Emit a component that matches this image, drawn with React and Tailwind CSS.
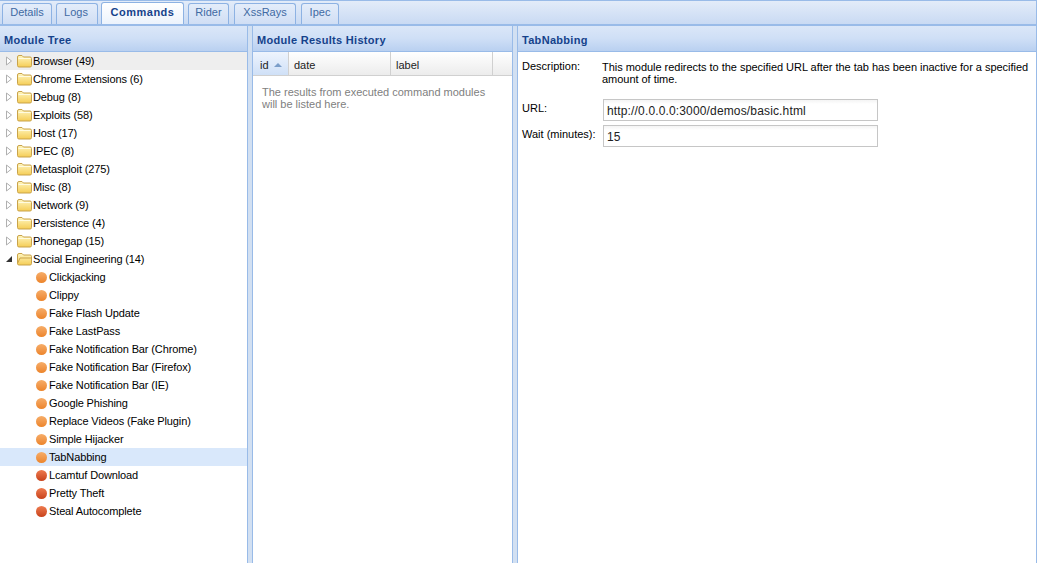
import React from "react";

const tabs = [
  ["Details", "w-[50px] ml-[2px]"],
  ["Logs", "w-[42px] ml-[4px] pr-[2px]"],
  ["Commands", "w-[83px] ml-[3px]"],
  ["Rider", "w-[41px] ml-[4px]"],
  ["XssRays", "w-[62px] ml-[5px]"],
  ["Ipec", "w-[38px] ml-[5px]"],
];
const folders = ["Browser (49)", "Chrome Extensions (6)", "Debug (8)", "Exploits (58)", "Host (17)", "IPEC (8)", "Metasploit (275)", "Misc (8)", "Network (9)", "Persistence (4)", "Phonegap (15)"];
const orange = ["Clickjacking", "Clippy", "Fake Flash Update", "Fake LastPass", "Fake Notification Bar (Chrome)", "Fake Notification Bar (Firefox)", "Fake Notification Bar (IE)", "Google Phishing", "Replace Videos (Fake Plugin)", "Simple Hijacker", "TabNabbing"];
const red = ["Lcamtuf Download", "Pretty Theft", "Steal Autocomplete"];

function Folder({ open }) {
  return (
    <svg width="15" height="14" viewBox="0 0 15 14" className="shrink-0">
      <defs>
        <linearGradient id="fg" x1="0" y1="0" x2="0" y2="1">
          <stop offset="0" stopColor="#fff6c0" />
          <stop offset="1" stopColor="#f5cd55" />
        </linearGradient>
      </defs>
      <path d="M0.5 3 Q0.5 1.5 2 1.5 H5 L6.5 3 H13 Q14.5 3 14.5 4.5 V11.5 Q14.5 13 13 13 H2 Q0.5 13 0.5 11.5 Z" fill="url(#fg)" stroke="#c9a34a" />
      {open ? <path d="M0.5 11.5 L3 6 H14.5" fill="none" stroke="#c9a34a" /> : <path d="M1.5 4.5 H13.5" stroke="#fffbe0" />}
    </svg>
  );
}
function Arrow({ open }) {
  return (
    <svg width="8" height="10" viewBox="0 0 8 10" className="shrink-0">
      {open ? <path d="M1 8 L7 8 L7 2 Z" fill="#333" /> : <path d="M1.5 1 L6.5 5 L1.5 9 Z" fill="#fff" stroke="#b0b0b0" />}
    </svg>
  );
}
function Dot({ red }) {
  return <span className={"shrink-0 mt-[1px] w-[11px] h-[11px] rounded-full " + (red ? "bg-gradient-to-b from-[#ee7a4e] to-[#c8421a]" : "bg-gradient-to-b from-[#f6ad68] to-[#ec8428]")} />;
}
function FolderRow({ label, first, open }) {
  return (
    <div className={"h-[18px] flex items-center pl-[5px] " + (first ? "bg-[#eeeeee]" : "")}>
      <Arrow open={open} />
      <span className="w-[4px]" />
      <Folder open={open} />
      <span className="ml-[1px] text-[11px] tracking-[-0.13px] text-black whitespace-nowrap">{label}</span>
    </div>
  );
}
function Leaf({ label, red, sel }) {
  return (
    <div className={"h-[18px] flex items-center pl-[36px] " + (sel ? "bg-[#d9e8fb]" : "")}>
      <Dot red={red} />
      <span className="ml-[2px] text-[11px] tracking-[-0.13px] text-black whitespace-nowrap">{label}</span>
    </div>
  );
}
function Header({ children }) {
  return (
    <div className="h-[26px] shrink-0 border-b border-[#99bbe8] bg-gradient-to-b from-[#dbe7f8] via-[#cfdff6] to-[#b9d0f0] pl-[4px] pt-[8px] text-[11px] leading-[13px] font-bold tracking-[0.3px] text-[#15428b] whitespace-nowrap">
      {children}
    </div>
  );
}
const splitter = "w-[6px] shrink-0 bg-[#d2e0f2] border-l border-r border-[#99bbe8]";

export default function App() {
  return (
    <div className="w-[1039px] h-[563px] overflow-hidden bg-white flex flex-col font-['Liberation_Sans',Arial,sans-serif]">
      <div className="h-[26px] shrink-0 flex items-end border-t border-[#99bbe8] border-b-2 border-b-[#99bbe8] bg-gradient-to-b from-[#e3ecf9] to-[#c9daf3] mr-[2px] border-r border-r-[#99bbe8]">
        {tabs.map(([t, w]) => {
          const active = t === "Commands";
          return (
            <div key={t} className={w + " pb-[3px] rounded-t-[3px] border border-b-0 border-[#8db2e3] flex items-center justify-center text-[11px] whitespace-nowrap " + (active ? "h-[22px] bg-gradient-to-b from-white to-[#ecf3fc] font-bold tracking-[0.5px] text-[#15428b]" : "h-[21px] bg-gradient-to-b from-[#e4edfa] to-[#d0def4] text-[#416aa3]")}>
              {t}
            </div>
          );
        })}
      </div>
      <div className="flex-1 flex min-h-0 mr-[2px]">
        <div className="w-[247px] shrink-0 flex flex-col bg-white">
          <Header>Module Tree</Header>
          <div>
            {folders.map((f, i) => <FolderRow key={f} label={f} first={i === 0} />)}
            <FolderRow label="Social Engineering (14)" open />
            {orange.map((l) => <Leaf key={l} label={l} sel={l === "TabNabbing"} />)}
            {red.map((l) => <Leaf key={l} label={l} red />)}
          </div>
        </div>
        <div className={splitter} />
        <div className="w-[259px] shrink-0 flex flex-col bg-white">
          <Header>Module Results History</Header>
          <div className="h-[24px] shrink-0 flex border-b border-[#d0d0d0] bg-gradient-to-b from-white to-[#ececec] text-[11px] text-[#222]">
            <div className="w-[36px] flex items-center pl-[7px] pt-[3px] gap-[5px] bg-gradient-to-b from-[#eef4fd] to-[#cfe0f7] border-r border-[#d0d0d0]">
              id
              <svg width="8" height="4" viewBox="0 0 8 4"><path d="M0 4 L4 0 L8 4 Z" fill="#7b9ec9" /></svg>
            </div>
            <div className="w-[102px] flex items-center pl-[5px] pt-[3px] border-r border-[#d0d0d0]">date</div>
            <div className="w-[102px] flex items-center pl-[5px] pt-[3px] border-r border-[#d0d0d0]">label</div>
          </div>
          <div className="pl-[9px] pt-[10px] text-[11px] leading-[12px] text-[#808080]">
            The results from executed command modules
            <br />
            will be listed here.
          </div>
        </div>
        <div className={splitter} />
        <div className="flex-1 flex flex-col bg-white border-r border-[#99bbe8] min-w-0">
          <Header>TabNabbing</Header>
          <div className="flex pl-[4px] pt-[8px] text-[11px] leading-[13px] text-black">
            <div className="w-[80px] shrink-0">Description:</div>
            <div className="pt-[1px] leading-[12px] pr-[2px] tracking-[-0.03px]">This module redirects to the specified URL after the tab has been inactive for a specified amount of time.</div>
          </div>
          <div className="flex items-center pl-[4px] mt-[14px] text-[11px] text-black">
            <div className="w-[81px] shrink-0 -mt-[4px]">URL:</div>
            <div className="w-[275px] h-[22px] border border-[#c6c6c6] bg-gradient-to-b from-[#f4f4f4] to-white to-[20%] pl-[3px] pt-[1px] flex items-center text-[12px] text-[#222] tracking-[0.15px]">http://0.0.0.0:3000/demos/basic.html</div>
          </div>
          <div className="flex items-center pl-[4px] mt-[4px] text-[11px] text-black">
            <div className="w-[81px] shrink-0 -mt-[4px] whitespace-nowrap">Wait (minutes):</div>
            <div className="w-[275px] h-[22px] border border-[#c6c6c6] bg-gradient-to-b from-[#f4f4f4] to-white to-[20%] pl-[3px] pt-[1px] flex items-center text-[12px] text-[#222]">15</div>
          </div>
        </div>
      </div>
    </div>
  );
}
